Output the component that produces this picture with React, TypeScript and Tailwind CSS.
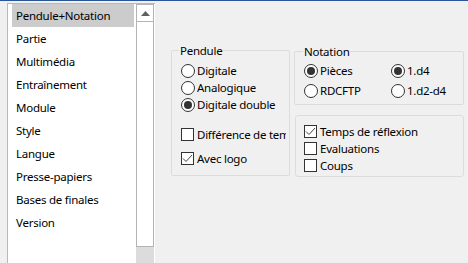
import React from "react";

const font = { fontFamily: '"Noto Sans", "Open Sans", sans-serif' };

function Radio({ checked }: { checked?: boolean }) {
  return (
    <span className="w-[14px] h-[14px] rounded-full border border-[#333333] bg-white flex items-center justify-center shrink-0">
      {checked && <span className="w-[8px] h-[8px] rounded-full bg-[#333333]" />}
    </span>
  );
}

function Check({ checked }: { checked?: boolean }) {
  return (
    <span className="w-[13px] h-[13px] border border-[#333333] bg-white flex items-center justify-center shrink-0">
      {checked && (
        <svg width="11" height="11" viewBox="0 0 11 11">
          <polyline points="1,5.5 4,8.5 10,2" fill="none" stroke="#444" strokeWidth="1" />
        </svg>
      )}
    </span>
  );
}

function RadioRow({ label, checked, h = "h-[17px]" }: { label: string; checked?: boolean; h?: string }) {
  return (
    <div className={`flex items-center gap-[2px] ${h} whitespace-nowrap`}>
      <Radio checked={checked} />
      <span>{label}</span>
    </div>
  );
}

function CheckRow({ label, checked, cls = "" }: { label: string; checked?: boolean; cls?: string }) {
  return (
    <div className={`flex items-center gap-[3px] h-[17px] whitespace-nowrap overflow-hidden ${cls}`}>
      <Check checked={checked} />
      <span>{label}</span>
    </div>
  );
}

const items = [
  "Pendule+Notation",
  "Partie",
  "Multimédia",
  "Entraînement",
  "Module",
  "Style",
  "Langue",
  "Presse-papiers",
  "Bases de finales",
  "Version",
];

export default function App() {
  return (
    <div className="w-[468px] h-[263px] bg-[#f0f0f0] overflow-hidden text-[11.5px] tracking-[-0.25px] text-black leading-none" style={font}>
      <div className="h-[1px] bg-[#2b5797]" />
      <div className="flex h-[262px]">
        <div className="mt-[2px] ml-[7px] w-[148px] h-[260px] bg-white border-l border-t border-[#b9b9b9] flex">
          <div className="w-[128px] pl-[4px] pr-[2px] pt-0">
            {items.map((it, i) => (
              <div
                key={it}
                className={`h-[23px] flex items-center pl-[4px] ${i === 0 ? "bg-[#cccccc]" : ""}`}
              >
                {it}
              </div>
            ))}
          </div>
          <div className="w-[18px] flex flex-col">
            <div className="h-[18px] border border-[#b4b4b4] flex items-center justify-center">
              <svg width="9" height="5" viewBox="0 0 9 5">
                <polygon points="0,5 4.5,0 9,5" fill="#606060" />
              </svg>
            </div>
            <div className="h-[225px] bg-white border border-t-0 border-[#b4b4b4]" />
            <div className="flex-1 bg-[#dcdcdc]" />
          </div>
        </div>
        <div className="flex items-start gap-[4px] pl-[16px] pt-[49px]">
          <div className="relative w-[119px] h-[126px] border border-[#dcdcdc] rounded-[2px] pl-[9px] pt-[11px]">
            <span className="absolute -top-[8px] left-[7px] px-[1px] bg-[#f0f0f0] h-[16px] flex items-center">Pendule</span>
            <RadioRow label="Digitale" />
            <RadioRow label="Analogique" />
            <RadioRow label="Digitale double" checked />
            <CheckRow label="Différence de temps" cls="mt-[13px] w-[105px]" />
            <CheckRow label="Avec logo" checked cls="mt-[7px]" />
          </div>
          <div className="flex flex-col">
            <div className="relative mt-[1px] w-[170px] h-[54px] border border-[#dcdcdc] rounded-[2px] pl-[9px] pt-[9px]">
              <span className="absolute -top-[8px] left-[8px] px-[1px] bg-[#f0f0f0] h-[16px] flex items-center">Notation</span>
              <div className="grid grid-cols-[87px_1fr]">
                <RadioRow label="Pièces" checked h="h-[20px]" />
                <RadioRow label="1.d4" checked h="h-[20px]" />
                <RadioRow label="RDCFTP" h="h-[20px]" />
                <RadioRow label="1.d2-d4" h="h-[20px]" />
              </div>
            </div>
            <div className="mt-[10px] ml-[1px] w-[169px] h-[62px] border border-[#dcdcdc] rounded-[3px] pl-[8px] pt-[7px]">
              <CheckRow label="Temps de réflexion" checked />
              <CheckRow label="Evaluations" />
              <CheckRow label="Coups" />
            </div>
          </div>
        </div>
      </div>
    </div>
  );
}
